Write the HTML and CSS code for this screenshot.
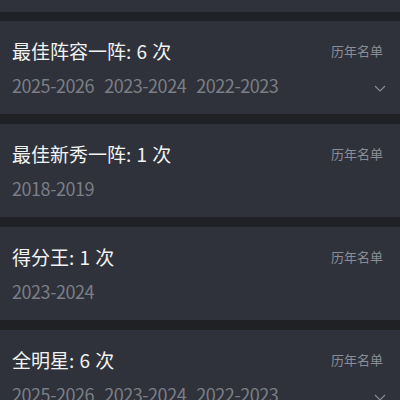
FILE: index.html
```html
<!DOCTYPE html>
<html lang="zh-CN">
<head>
<meta charset="utf-8">
<link rel="stylesheet" href="styles.css">
</head>
<body>
<div class="list">
  <div class="card-tail"></div>
  <div class="card">
    <div class="head"><span class="title">最佳阵容一阵: 6 次</span><span class="link">历年名单</span></div>
    <div class="years"><span>2025-2026</span><span>2023-2024</span><span>2022-2023</span>
      <svg class="chev" viewBox="0 0 12 7" width="12" height="7"><path d="M1 1 L6 6 L11 1" fill="none" stroke="#8a8d94" stroke-width="1.1"/></svg>
    </div>
  </div>
  <div class="card">
    <div class="head"><span class="title">最佳新秀一阵: 1 次</span><span class="link">历年名单</span></div>
    <div class="years"><span>2018-2019</span></div>
  </div>
  <div class="card">
    <div class="head"><span class="title">得分王: 1 次</span><span class="link">历年名单</span></div>
    <div class="years"><span>2023-2024</span></div>
  </div>
  <div class="card">
    <div class="head"><span class="title">全明星: 6 次</span><span class="link">历年名单</span></div>
    <div class="years"><span>2025-2026</span><span>2023-2024</span><span>2022-2023</span>
      <svg class="chev" viewBox="0 0 12 7" width="12" height="7"><path d="M1 1 L6 6 L11 1" fill="none" stroke="#8a8d94" stroke-width="1.1"/></svg>
    </div>
  </div>
</div>
</body>
</html>
```
FILE: styles.css
```css
html, body {
  margin: 0;
  padding: 0;
  background: #1f2125;
  height: 100%;
  overflow: hidden;
}
body {
  font-family: "Noto Sans CJK SC", "Noto Sans", sans-serif;
}
.list {
  display: flex;
  flex-direction: column;
  gap: 10px;
}
.card-tail {
  background: #2f323a;
  height: 12px;
  margin-bottom: -1px;
}
.card {
  background: #2f323a;
  height: 93px;
  box-sizing: border-box;
  padding: 17px 14px 0 12px;
}
.head {
  display: flex;
  justify-content: space-between;
  align-items: center;
  height: 26px;
}
.title {
  color: #f2f2f2;
  font-size: 19px;
  font-weight: 400;
  line-height: 26px;
  word-spacing: 1px;
}
.link {
  color: #8a8d94;
  font-size: 13px;
  line-height: 18px;
  margin-right: 3px;
}
.years {
  display: flex;
  align-items: center;
  gap: 10px;
  margin-top: 8px;
  height: 26px;
  color: #7b7e86;
  font-size: 18px;
  letter-spacing: -0.45px;
  line-height: 26px;
}
.chev {
  margin-left: auto;
  margin-top: 7px;
}
```
